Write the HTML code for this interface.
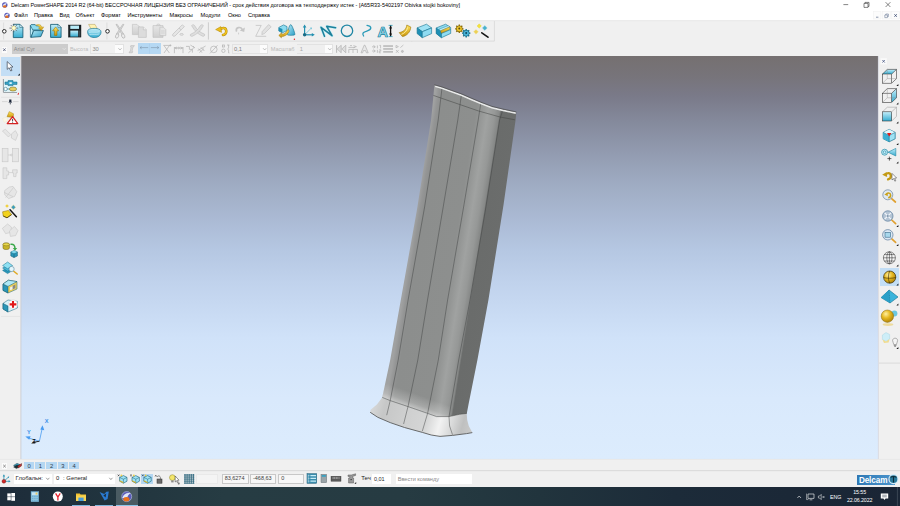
<!DOCTYPE html>
<html lang="ru">
<head>
<meta charset="utf-8">
<title>Delcam PowerSHAPE</title>
<style>
html,body{margin:0;padding:0;background:#fff;}
body{width:900px;height:506px;overflow:hidden;position:relative;font-family:"Liberation Sans",sans-serif;}
#app{position:absolute;left:0;top:0;width:900px;height:506px;overflow:hidden;background:#f0f0f0;}
.abs{position:absolute;}
.t{position:absolute;white-space:nowrap;font-size:5.6px;line-height:7px;color:#000;letter-spacing:-0.02px;}
#titlebar{left:0;top:0;width:900px;height:10px;background:#fff;}
#menubar{left:0;top:10px;width:900px;height:10.5px;background:#fff;border-bottom:0.5px solid #d8d8d8;}
#tb1{left:0;top:21px;width:900px;height:21px;background:#f0f0f0;}
#tb2{left:0;top:42px;width:900px;height:14px;background:#f0f0f0;}
#viewport{left:21px;top:56px;width:857px;height:403px;
 background:linear-gradient(to bottom,#757070 0%,#77747a 5%,#7a7a89 10%,#84899b 16%,#929bb0 24%,#9facc3 32%,#aab9d3 40%,#b5c7e2 48%,#c0d2ec 56%,#d0e2f9 70%,#d9e9fc 85%,#dcecfd 100%);}
#leftbar{left:0;top:56px;width:21px;height:403px;background:#f0f0f0;}
#rightbar{left:878px;top:56px;width:22px;height:403px;background:#f0f0f0;}
#tabbar{left:0;top:459px;width:900px;height:11px;background:#f0f0f0;}
#status{left:0;top:470px;width:900px;height:17px;background:#f0f0f0;border-top:0.5px solid #dcdcdc;}
#taskbar{left:0;top:487px;width:900px;height:19px;background:linear-gradient(to right,#1d2c3a 0%,#21343e 12%,#263c43 25%,#263b42 45%,#21343d 60%,#1c2b39 75%,#1a2535 100%);}
.inp{position:absolute;background:#fff;border:0.5px solid #c8c8c8;box-sizing:border-box;}
.inpd{position:absolute;background:#f6f6f6;border:0.5px solid #d9d9d9;box-sizing:border-box;}
svg{position:absolute;overflow:visible;}
</style>
</head>
<body>
<div id="app">
<!-- TITLE BAR -->
<div id="titlebar" class="abs">
  <div class="t" style="left:11px;top:1.9px;font-size:5.465px;"><span style="letter-spacing:-0.069px">Delcam PowerSHAPE 2014 R2 (64-bit) </span><span style="letter-spacing:-0.036px">БЕССРОЧНАЯ ЛИЦЕНЗИЯ БЕЗ ОГРАНИЧЕНИЙ - </span><span style="letter-spacing:0.032px">срок действия договора на техподдержку истек - </span><span style="letter-spacing:-0.007px">[A65R33-5402197 Obivka stojki bokoviny]</span></div>
</div>
<!-- MENU BAR -->
<div id="menubar" class="abs">
  <div class="t" style="left:14px;top:1.8px;">Файл</div>
  <div class="t" style="left:34px;top:1.8px;">Правка</div>
  <div class="t" style="left:59.5px;top:1.8px;">Вид</div>
  <div class="t" style="left:75.5px;top:1.8px;">Объект</div>
  <div class="t" style="left:101px;top:1.8px;">Формат</div>
  <div class="t" style="left:127.5px;top:1.8px;">Инструменты</div>
  <div class="t" style="left:169.5px;top:1.8px;">Макросы</div>
  <div class="t" style="left:200.5px;top:1.8px;">Модули</div>
  <div class="t" style="left:228px;top:1.8px;">Окно</div>
  <div class="t" style="left:248px;top:1.8px;">Справка</div>
</div>
<!-- TOOLBAR 1 -->
<div id="tb1" class="abs"></div>
<svg id="tb1icons" class="abs" style="left:0;top:0;" width="900" height="506" viewBox="0 0 900 506">
 <defs>
  <linearGradient id="cy" x1="0" y1="0" x2="0" y2="1"><stop offset="0" stop-color="#c4eefa"/><stop offset="1" stop-color="#35acd0"/></linearGradient>
  <linearGradient id="cy2" x1="0" y1="0" x2="1" y2="1"><stop offset="0" stop-color="#b8ebf9"/><stop offset="1" stop-color="#2c9fc6"/></linearGradient>
  <linearGradient id="gold" x1="0" y1="0" x2="0" y2="1"><stop offset="0" stop-color="#ffe25a"/><stop offset="1" stop-color="#c8940c"/></linearGradient>
  <linearGradient id="gry" x1="0" y1="0" x2="0" y2="1"><stop offset="0" stop-color="#e6e6e6"/><stop offset="1" stop-color="#cfcfcf"/></linearGradient>
 </defs>
 <!-- frame lines -->
 <path d="M0,20.6 H900" stroke="#dadada" stroke-width="0.6"/>
 <path d="M0,41.1 H494.4 V21" stroke="#d4d4d4" stroke-width="0.7" fill="none"/>
 <path d="M411.8,55.4 V41.4" stroke="#d4d4d4" stroke-width="0.7" fill="none"/>
 <!-- grips -->
 <path d="M3.6,22.5 V39.5 M106.9,22.5 V39.5" stroke="#d4d4d4" stroke-width="0.7"/>
 <circle cx="4.3" cy="31.3" r="1.8" fill="#fff" stroke="#2a2a2a" stroke-width="1"/>
 <circle cx="107.5" cy="31.3" r="1.8" fill="#fff" stroke="#2a2a2a" stroke-width="1"/>
 <!-- new doc -->
 <path d="M13.3,24.3 H19.8 L22.9,27.5 V37.6 H13.3 Z" fill="url(#cy)" stroke="#0e566e" stroke-width="0.8"/>
 <path d="M19.8,24.3 V27.5 H22.9 Z" fill="#eafaff" stroke="#0e566e" stroke-width="0.5"/>
 <circle cx="13.8" cy="28.1" r="2.9" fill="#f4fbfd" opacity="0.8"/>
 <path d="M13.8,23.9 V32.3 M9.4,28.1 H18.2 M10.8,25.1 L16.8,31.1 M16.8,25.1 L10.8,31.1" stroke="#4e5456" stroke-width="0.7"/>
 <circle cx="13.8" cy="28.1" r="2" fill="#fdf6a8"/>
 <circle cx="13.8" cy="28.1" r="1.1" fill="#fffde0"/>
 <!-- open folder -->
 <path d="M30.4,25.6 L31.2,24.6 H35.2 L36.2,25.8 H40.5 V30 H30.4 Z" fill="#8fdcf0" stroke="#0e566e" stroke-width="0.7"/>
 <path d="M30.4,25.6 V37.2 H31.2 L33.4,31 Z" fill="#bfeefa" stroke="#0e566e" stroke-width="0.6"/>
 <path d="M33.6,30.6 H43.4 L40.8,36.6 L31,37.3 Z" fill="url(#cy2)" stroke="#0e566e" stroke-width="0.8"/>
 <path d="M35.8,25.2 C38.6,23.6 41.4,24.8 41.8,27.2 L43.7,26.9 L41.4,30.6 L38.4,28 L40,27.7 C39.6,26.3 38,25.6 35.8,25.2 Z" fill="url(#gold)" stroke="#a87c08" stroke-width="0.4"/>
 <!-- import doc -->
 <path d="M50.6,24.4 H58 L61.1,27.6 V37.4 H50.6 Z" fill="url(#cy)" stroke="#0e566e" stroke-width="0.8"/>
 <path d="M58,24.4 V27.6 H61.1 Z" fill="#eafaff" stroke="#0e566e" stroke-width="0.5"/>
 <path d="M55.7,26.9 L58.8,30.8 H57 V35.4 H54.4 V30.8 H52.6 Z" fill="url(#gold)" stroke="#8a6a06" stroke-width="0.5"/>
 <!-- save -->
 <rect x="68.4" y="25" width="12.6" height="12.1" fill="#1c2226" stroke="#101416" stroke-width="0.4"/>
 <rect x="70.3" y="25.6" width="8.7" height="3.3" fill="#b9ecf8"/>
 <rect x="70.3" y="30.6" width="7.9" height="6" fill="url(#cy)"/>
 <rect x="78.9" y="30.6" width="1.4" height="6" fill="#3a4a50"/>
 <!-- print -->
 <path d="M88.6,24.4 H95 L97.4,28.8 H91 Z" fill="#fff2b0" stroke="#b09a50" stroke-width="0.5"/>
 <path d="M87.6,31.5 C87.6,29.4 90,28.4 94.2,28.4 C98.6,28.4 101,29.6 101,32 C101,35.6 98,37.5 94.2,37.5 C90.2,37.5 87.6,35.4 87.6,31.5 Z" fill="url(#cy)" stroke="#1a7896" stroke-width="0.7"/>
 <path d="M89,32.5 C92,31.4 96,33 99.5,31.6 M89.6,34.6 C92.6,33.8 96,35.4 99,34" stroke="#dff6fc" stroke-width="0.5" fill="none"/>
 <!-- scissors -->
 <g stroke="#b4b4b4" stroke-width="0.7" fill="#dedede">
  <path d="M116,24.4 L117.2,24.4 L123.6,34 L122.2,34.8 Z"/>
  <path d="M123.9,24.4 L122.7,24.4 L116.4,34 L117.8,34.8 Z"/>
  <ellipse cx="117.1" cy="36" rx="1.5" ry="2.3" transform="rotate(25 117.1 36)" fill="#ececec"/>
  <ellipse cx="123.2" cy="36" rx="1.5" ry="2.3" transform="rotate(-25 123.2 36)" fill="#ececec"/>
 </g>
 <!-- copy -->
 <g stroke="#bdbdbd" stroke-width="0.6" fill="url(#gry)">
  <path d="M132.4,24.4 H137 L139.4,26.8 V34.6 H132.4 Z"/>
  <path d="M138.4,26.9 H143.4 L146.3,29.8 V37.4 H138.4 Z" fill="#dcdcdc"/>
  <path d="M143.4,26.9 V29.8 H146.3" fill="#f2f2f2"/>
 </g>
 <!-- paste -->
 <g stroke="#bdbdbd" stroke-width="0.6" fill="url(#gry)">
  <path d="M153,25.6 H163 V37.4 H153 Z"/>
  <path d="M156.4,25.6 C156.4,23.6 160.4,23.6 160.4,25.6 Z" fill="#e8e8e8"/>
  <path d="M159.8,27.2 H163.4 L165.8,29.6 V35.6 H159.8 Z" fill="#e4e4e4"/>
  <path d="M161,31 H164.6 M161,33 H164.6" stroke="#c8c8c8"/>
 </g>
 <!-- eraser -->
 <g stroke="#b8b8b8" stroke-width="0.6" fill="#e6e6e6">
  <path d="M182.2,24.9 L184.4,26.5 L175,36 C173.6,37 171.8,35.6 172.8,34.2 Z"/>
  <path d="M179,28.2 L181.2,29.8" fill="none"/>
  <ellipse cx="181.6" cy="34.4" rx="1.7" ry="0.9"/>
 </g>
 <!-- delete X -->
 <g stroke="#bcbcbc" stroke-width="0.6" fill="#dedede">
  <path d="M191.6,25.6 C192.6,24.4 194,24.6 194.6,25.6 C197,30 200,32.4 204.6,34.2 C205,35.6 204,36.6 202.6,36.2 C198,34.2 194.6,31 191.6,25.6 Z"/>
  <path d="M203.4,25.6 C202.6,24.5 201,24.6 200.4,25.6 C198,29.8 195,32.4 190.4,34.4 C190,35.8 191,36.6 192.4,36.2 C197,34.2 200.6,31 203.4,25.6 Z"/>
 </g>
 <path d="M208.4,22.3 V39.6" stroke="#bebebe" stroke-width="0.7"/>
 <!-- undo -->
 <path d="M219.6,30.2 C221,27.6 225.6,27 226.2,30.4 C226.6,32.6 225,34.4 223,35" fill="none" stroke="#b58a0a" stroke-width="2.6" stroke-linecap="round"/>
 <path d="M219.6,30.2 C221,27.6 225.6,27 226.2,30.4 C226.6,32.6 225,34.4 223,35" fill="none" stroke="#f0c420" stroke-width="1.5" stroke-linecap="round"/>
 <path d="M215.6,29.6 L220.8,26.6 L221.6,32.4 Z" fill="#ecbe1c" stroke="#b58a0a" stroke-width="0.5"/>
 <!-- redo -->
 <path d="M236.4,31 C235.6,27.4 240.6,26.2 242.2,29.4" fill="none" stroke="#c6c6c6" stroke-width="1.7" stroke-linecap="round"/>
 <path d="M244.9,27.6 L244.2,32 L239.8,30.6 Z" fill="#c6c6c6"/>
 <path d="M238.6,32.6 V34.4" stroke="#cfcfcf" stroke-width="1"/>
 <!-- edit pencil -->
 <path d="M255.7,25.4 H261.2 L255.7,36.3 H266.2" fill="none" stroke="#bdbdbd" stroke-width="0.7"/>
 <path d="M268.6,24.6 L271.2,26.8 L264.4,33.6 L261.8,34.6 L262.2,31.6 Z" fill="#e2e2e2" stroke="#bcbcbc" stroke-width="0.6"/>
 <!-- shapes -->
 <path d="M278.8,27.4 L283.6,24.9 L287,26.6 L287,30.6 L282.4,32.8 L278.8,31 Z" fill="#8ddcf0" stroke="#12708e" stroke-width="0.6"/>
 <path d="M278.8,27.4 L282.4,29 L282.4,32.8 L278.8,31 Z" fill="#1f8fb4"/>
 <path d="M290.7,24.6 C292,24.6 294.9,33 294.9,34.4 C294.9,35.6 287.2,35.6 287.2,34.4 C287.2,33 289.4,24.6 290.7,24.6 Z" fill="url(#cy2)" stroke="#12708e" stroke-width="0.6"/>
 <path d="M287.6,29.8 C286.4,33 283.6,34.4 281.4,34.2 L281.6,32.8 L278.8,35.4 L281.4,37.8 L281.4,36.4 C285,36.6 288.4,34 289.2,30.4 Z" fill="url(#gold)" stroke="#9a7408" stroke-width="0.5"/>
 <circle cx="294.4" cy="39.3" r="0.7" fill="#e02020"/>
 <!-- axis -->
 <g stroke="#2390b0" stroke-width="1.2" fill="none">
  <path d="M304.6,34.8 V26.5"/><path d="M304.6,34.8 H312.6"/>
  <path d="M304.6,34.8 L311.2,28.2" stroke="#6cc0d6" stroke-width="0.8"/>
 </g>
 <path d="M304.6,24.4 L306.4,27.4 H302.8 Z M314.8,34.8 L311.8,36.6 V33 Z" fill="#2390b0"/>
 <path d="M312,27.4 L311.6,29.6 L309.8,27.8 Z" fill="#6cc0d6"/>
 <circle cx="304.6" cy="34.8" r="1.7" fill="#1a6c86"/>
 <!-- polyline -->
 <path d="M324.5,36.2 L321,27.3 L332,35.7 L326.7,26.3 L335.6,27.7" fill="none" stroke="#a8ecf8" stroke-width="2.6" stroke-linejoin="round" stroke-linecap="round" opacity="0.7"/>
 <path d="M324.5,36.2 L321,27.3 L332,35.7 L326.7,26.3 L335.6,27.7" fill="none" stroke="#1d7f9a" stroke-width="1.5" stroke-linejoin="round" stroke-linecap="round"/>
 <!-- circle -->
 <circle cx="347" cy="30.8" r="5.7" fill="none" stroke="#1f86a4" stroke-width="1.3"/>
 <!-- S curve -->
 <path d="M367,25.4 C372,26 372,29.4 367.4,30.9 C364,32 361.4,32.6 363.6,36" fill="none" stroke="#2a9ab8" stroke-width="1.3" stroke-linecap="round"/>
 <!-- A text -->
 <text x="377.6" y="37" font-family="Liberation Sans, sans-serif" font-weight="bold" font-size="14.6" fill="#8fdff2" stroke="#167a98" stroke-width="0.7">A</text>
 <path d="M390.6,25.4 V36.4" stroke="#111" stroke-width="1.3"/>
 <path d="M388.6,25.4 H392.6 M388.8,36.6 H392.6" stroke="#2a9ab8" stroke-width="0.8"/>
 <path d="M390.6,25.6 L392,28.4 H389.2 Z M390.6,36.4 L392,33.6 H389.2 Z" fill="#111"/>
 <!-- gold surface -->
 <path d="M406.8,25 L410.8,27 C410.4,32 407,35.8 402.4,36.6 L399.2,32.6 C403,32 406.4,29.6 406.8,25 Z" fill="url(#gold)" stroke="#9a7408" stroke-width="0.6"/>
 <path d="M407.6,27.4 C407,31 404.4,33.4 401.4,34.4" stroke="#fff2a8" stroke-width="0.9" fill="none"/>
 <!-- block -->
 <path d="M417.1,27.9 L426.5,24.2 L431.6,27.9 L422.3,31.7 Z" fill="#9fe2f4" stroke="#12708e" stroke-width="0.6"/>
 <path d="M417.1,27.9 L422.3,31.7 V37.7 L417.1,33.6 Z" fill="#1f8fb4" stroke="#12708e" stroke-width="0.6"/>
 <path d="M422.3,31.7 L431.6,27.9 V33.6 L422.3,37.7 Z" fill="#8fdcf2" stroke="#12708e" stroke-width="0.6"/>
 <!-- feature -->
 <path d="M436.3,27.9 L445.6,24.2 L450.7,27.4 V33.4 L441.5,37.7 L436.3,33.6 Z" fill="#8fdcf2" stroke="#12708e" stroke-width="0.6"/>
 <path d="M436.3,27.9 L441.5,31.7 V37.7 L436.3,33.6 Z" fill="#1f8fb4" stroke="#12708e" stroke-width="0.5"/>
 <path d="M439,29.2 L448.2,25.6 L449.6,27 L440.6,30.8 Z" fill="#bdeefa" stroke="#12708e" stroke-width="0.4"/>
 <path d="M440.6,30.8 L449.6,27 V29.6 L441.4,33.2 Z" fill="url(#gold)" stroke="#9a7408" stroke-width="0.4"/>
 <path d="M441.5,33.4 L450.7,29.6" stroke="#12708e" stroke-width="0.5"/>
 <!-- gears -->
 <g>
  <circle cx="459.3" cy="28.8" r="3" fill="#e6b81c" stroke="#6a5206" stroke-width="0.7"/>
  <path d="M459.3,24.6 V33 M455.1,28.8 H463.5 M456.3,25.8 L462.3,31.8 M462.3,25.8 L456.3,31.8" stroke="#8a6c0a" stroke-width="1.3"/>
  <circle cx="459.3" cy="28.8" r="2.5" fill="#f0c828"/>
  <circle cx="459.3" cy="28.6" r="1" fill="#5a4a10"/>
  <circle cx="466.2" cy="33.2" r="3" fill="#3aa6cc" stroke="#0e5a74" stroke-width="0.7"/>
  <path d="M466.2,29 V37.4 M462,33.2 H470.4 M463.2,30.2 L469.2,36.2 M469.2,30.2 L463.2,36.2" stroke="#14708e" stroke-width="1.3"/>
  <circle cx="466.2" cy="33.2" r="2.5" fill="#4ab4d8"/>
  <circle cx="466.2" cy="33" r="1" fill="#0e4a60"/>
 </g>
 <!-- wand -->
 <path d="M481.8,32.8 L488,37.2" stroke="#151515" stroke-width="1.6" stroke-linecap="round"/>
 <path d="M479.2,23.8 L481.4,26 L479.2,28.2 L477,26 Z" fill="#f4e23a" stroke="#d8c830" stroke-width="0.3"/>
 <path d="M484.8,25.6 L487.2,28 L484.8,30.4 L482.4,28 Z" fill="#4ab0cc" stroke="#8ad4e4" stroke-width="0.4"/>
 <path d="M476,29.4 L478.4,31.8 L476,34.2 L473.6,31.8 Z" fill="#ecd056" stroke="#f4e6a0" stroke-width="0.4"/>
</svg>
<!-- TOOLBAR 2 -->
<div id="tb2" class="abs">
  <div class="abs" style="left:1.6px;top:5px;width:5.6px;height:5.6px;background:#fbfbfb;"></div>
  <div class="abs" style="left:12px;top:1.6px;width:55.6px;height:10.6px;background:#cccccc;"></div>
  <div class="t" style="left:13.8px;top:3.7px;color:#8c8c8c;font-size:5.5px;">Arial Cyr</div>
  <div class="t" style="left:69.9px;top:4px;color:#bcbcbc;font-size:5.4px;">Высота</div>
  <div class="inp" style="left:89.7px;top:1.6px;width:34.2px;height:10.6px;background:#fcfcfc;border-color:#e2e2e2;"></div>
  <div class="abs" style="left:90.6px;top:2.4px;width:24.6px;height:9px;background:#f1f1f1;"></div>
  <div class="t" style="left:92.4px;top:3.7px;color:#8a8a8a;font-size:5.75px;">30</div>
  <div class="abs" style="left:138.2px;top:1.2px;width:22.5px;height:11px;background:#b5d8f3;"></div>
  <div class="inp" style="left:231.9px;top:1.9px;width:36.3px;height:10px;background:#fcfcfc;border-color:#e2e2e2;"></div>
  <div class="abs" style="left:232.6px;top:2.6px;width:27.4px;height:8.6px;background:#f0f0f0;"></div>
  <div class="t" style="left:234.1px;top:3.7px;color:#7c7c7c;font-size:5.75px;">0,1</div>
  <div class="t" style="left:270.8px;top:4px;color:#bababa;font-size:5.55px;">Масштаб</div>
  <div class="inp" style="left:296.7px;top:1.9px;width:36.7px;height:10px;background:#fcfcfc;border-color:#e2e2e2;"></div>
  <div class="abs" style="left:297.4px;top:2.6px;width:27.6px;height:8.6px;background:#efefef;"></div>
  <div class="t" style="left:299.7px;top:3.7px;color:#a8a8a8;font-size:5.75px;">1</div>
</div>
<svg id="tb2icons" class="abs" style="left:0;top:0;" width="900" height="506" viewBox="0 0 900 506">
 <path d="M3.2,48.4 L5.6,51 M5.6,48.4 L3.2,51" stroke="#4a5272" stroke-width="0.8"/>
 <g fill="none" stroke="#e6e6e6" stroke-width="0.7"><path d="M62.6,48 L64.2,49.8 L65.8,48"/></g>
 <g fill="none" stroke="#9a9a9a" stroke-width="0.6">
  <path d="M118.4,48.2 L120,50 L121.6,48.2"/><path d="M263.1,48.2 L264.7,50 L266.3,48.2"/><path d="M328.2,48.2 L329.8,50 L331.4,48.2"/>
 </g>
 <!-- italic I -->
 <path d="M130.8,45.6 H134.4 L133.6,46.8 H133 L132,51.6 H132.8 L132.2,52.8 H129 L129.6,51.6 H130.2 L131.2,46.8 H130.4 Z" fill="#dcdcdc" stroke="#b4b4b4" stroke-width="0.5"/>
 <!-- arrows in blue box -->
 <g stroke="#7e93aa" stroke-width="0.6" fill="none">
  <path d="M140,47.6 H148.2 M141.6,46.4 L140,47.6 L141.6,48.8"/>
  <path d="M150.8,47.6 H158.8 M157.2,46.4 L158.8,47.6 L157.2,48.8"/>
  <path d="M149.5,43.6 V53.8" stroke="#a4cbe8" stroke-width="0.5"/>
 </g>
 <g stroke="#b2b2b2" stroke-width="0.7" fill="none">
  <!-- X icon -->
  <path d="M163.4,45.4 H170 M164,45.6 L169.4,53 M169.4,45.6 L164,53 M170.4,44.4 V46.4 M169.4,45.4 H171.4"/>
  <!-- |-| -->
  <path d="M174.4,47 V53.2 M183,47 V53.2 M174.4,48 H183 M177,47 L175,48 L177,49 M180.4,47 L182.4,48 L180.4,49"/>
  <circle cx="178.7" cy="48" r="0.8" fill="#f0f0f0"/>
  <!-- zigzag arrows -->
  <path d="M186,46.4 H189.4 V49.4 H192.4 V52.6 M190.4,45 L194.4,47.6 M188.4,52.8 L192.8,49 M193,46 L194.6,47.6 L192.6,48.4"/>
  <path d="M197.6,50.6 L205.6,46 M199.4,52.6 L204,48.6 M198.4,48.6 L202,52.6 M201,47.4 L204.4,51"/>
  <!-- diameter -->
  <circle cx="213.8" cy="49.4" r="3.3"/><path d="M210,53.4 L217.6,45.2"/>
  <!-- boxes -->
  <circle cx="223.4" cy="50.8" r="1.7"/><rect x="222.4" y="45" width="2" height="2"/><path d="M227,45 H229.4 M228.6,45 V48 L227.6,49 L228.6,50 V53 H229.4"/>
  <!-- |<< -->
  <path d="M336.6,45.2 V52.8" stroke-width="0.9"/>
  <path d="M341.2,45.2 L337.2,49 L341.2,52.8 Z M345.8,45.2 L341.8,49 L345.8,52.8 Z" fill="#dedede"/>
  <!-- icon2 -->
  <path d="M348.4,47.4 H355 M353.4,45.6 L356.4,46.6 L353.4,47.8 M348.8,53 V49.4 H357.4 V53 M353,49.4 V53 M350,45.6 H352"/>
  <!-- A outline -->
  <path d="M361,52.8 L364.2,45.2 H365 L368.2,52.8 H366.4 L365.6,50.6 H363.4 L362.6,52.8 Z" fill="#e8e8e8"/>
  <!-- icon4 -->
  <path d="M372,46.8 H375 M373.4,45.4 L375.4,46.8 L373.4,48.2 M372,51 H375 M373.4,49.6 L375.4,51 L373.4,52.4 M377.4,45.4 V48.4 M379.4,45.4 H380.6 V48.4 M377.4,49.8 V52.8 M379.2,49.8 H380.8 V51.2 H379.2 V52.8 H380.8"/>
  <!-- icon6 -->
  <path d="M396,45.4 L398.4,46.6 L396,47.8 Z M400.4,47.6 L403.4,45 M396,50 L398.6,52.8 M398.6,50 L396,52.8"/>
  <circle cx="402.4" cy="51.4" r="1" fill="#c8c8c8"/>
 </g>
 <g fill="#bdbdbd"><rect x="383.2" y="45.2" width="9.8" height="1.7"/><rect x="383.2" y="48.1" width="9.8" height="1.7"/><rect x="383.2" y="51" width="9.8" height="1.7"/></g>
</svg>
<!-- VIEWPORT -->
<div id="viewport" class="abs"></div>
<svg id="model" class="abs" style="left:0;top:0;" width="900" height="506" viewBox="0 0 900 506">
 <defs>
  <linearGradient id="gBody" gradientUnits="userSpaceOnUse" x1="431" y1="120" x2="515.6" y2="133.5">
   <stop offset="0" stop-color="#a0a1a1"/>
   <stop offset="0.04" stop-color="#949595"/>
   <stop offset="0.09" stop-color="#8c8e8d"/>
   <stop offset="0.50" stop-color="#8d8f8e"/>
   <stop offset="0.56" stop-color="#949695"/>
   <stop offset="0.64" stop-color="#a0a2a1"/>
   <stop offset="0.72" stop-color="#969897"/>
   <stop offset="0.775" stop-color="#868887"/>
   <stop offset="0.792" stop-color="#6a6c6b"/>
   <stop offset="1" stop-color="#6b6d6c"/>
  </linearGradient>
 </defs>
 <path id="bodyShape" fill="url(#gBody)" d="M434.4,85 L442.1,87.3 L451.8,90.8 L461.5,94.2 L471.2,98.4 L480.9,102.5 L492,106.7 L503,109.4 L516.3,112.2 L515.6,120 L503.5,205 L488.4,300 L477.4,360 L468.5,404.5 L466.7,414 L449,417 L436.5,416.8 L427.6,413.6 L408,406.8 L390.2,400.8 L382.2,397.6 L390.2,360 L400.8,300 L416.9,210 L431.1,120 Z"/>
 <!-- flange -->
 <defs>
  <linearGradient id="gFl" gradientUnits="userSpaceOnUse" x1="372" y1="408" x2="470" y2="436">
   <stop offset="0" stop-color="#d6d7d7"/>
   <stop offset="0.12" stop-color="#c6c7c7"/>
   <stop offset="0.3" stop-color="#cdcece"/>
   <stop offset="0.55" stop-color="#d5d6d6"/>
   <stop offset="0.68" stop-color="#f2f2f2"/>
   <stop offset="0.8" stop-color="#d8d9d9"/>
   <stop offset="0.9" stop-color="#bfc0c0"/>
   <stop offset="1" stop-color="#c9caca"/>
  </linearGradient>
 </defs>
 <path fill="url(#gFl)" d="M382.2,397.4 L390.2,400.6 L408,406.6 L427.6,413.4 L436.5,416.6 L449,416.6 L459.6,414.3 L466.7,413.4 L467.2,420 L468.8,426 L472.3,432.6 L466.7,433.6 L452.5,435.4 L440,436.4 L431.2,435 L422.3,432.4 L404.5,427.5 L390.2,422.6 L377.8,417.3 L370.2,412.3 L370.6,409.8 L376.9,404.5 Z"/>
 <path fill="none" stroke="#5a5b5b" stroke-width="0.9" d="M370.2,412.3 L377.8,417.3 L390.2,422.6 L404.5,427.5 L422.3,432.4 L431.2,435 L440,436.4 L452.5,435.4 L466.7,433.6 L472.3,432.6"/>
 <defs>
  <linearGradient id="gFil" gradientUnits="userSpaceOnUse" x1="409" y1="407" x2="414" y2="393">
   <stop offset="0" stop-color="#ffffff" stop-opacity="0.5"/>
   <stop offset="0.35" stop-color="#ffffff" stop-opacity="0.22"/>
   <stop offset="1" stop-color="#ffffff" stop-opacity="0"/>
  </linearGradient>
 </defs>
 <path fill="url(#gFil)" d="M382.2,397.4 L390.2,400.6 L408,406.6 L427.6,413.4 L436.5,416.6 L449,416.6 L452,400.6 L439,400.6 L430.4,397.4 L410.8,390.6 L393,384.6 L385,381.4 Z"/>
 <!-- seams -->
 <g fill="none" stroke="#404241" stroke-width="0.48">
  <path d="M442.1,87.3 L438.2,120 L424.6,207 L408.1,300 L398.2,360 L390.2,400.6 L386.7,415.2"/>
  <path d="M461.5,94.2 L457.8,120 L443.2,207 L427.5,300 L417.8,360 L408,406.6 L403.6,424"/>
  <path d="M480.9,102.5 L478.2,120 L463.6,207 L447.6,300 L438.3,360 L427.6,413.4 L422.3,431.2"/>
  <path d="M503,109.4 L499.6,120 L485.9,207 L470,300 L458.7,360 L449,416.6 L449.6,426 L452.5,434.7"/>
  <path d="M382.2,397.4 L390.2,400.6 L408,406.6 L427.6,413.4 L436.5,416.6 L449,416.6 L459.6,414.3 L466.7,413.4" stroke-width="0.5"/>
  <path d="M433.4,95.4 L441.7,98.3 L459.4,104.4 L478.9,111.1 L500,117 L514.9,119.8" stroke-width="0.5"/>
 </g>
 <!-- top highlight -->
 <path fill="none" stroke="#e8e9e9" stroke-width="1.6" d="M435.2,86.2 L442.1,88.3 L451.8,91.8 L461.5,95.2 L471.2,99.4 L480.9,103.5 L492,107.7 L503,110.4 L515.8,113.1"/>
 <path fill="none" stroke="#4a4b4b" stroke-width="0.7" d="M434.4,84.8 L442.1,87 L451.8,90.5 L461.5,93.9 L471.2,98.1 L480.9,102.2 L492,106.4 L503,109.1 L516.3,111.9"/>
 <!-- axes -->
 <g>
  <path d="M39.4,441.2 L42.2,428.5" stroke="#4a9cf0" stroke-width="0.8" fill="none"/>
  <path d="M42.5,425.3 L44.3,430.2 L40.3,429.6 Z" fill="#4a9cf0"/>
  <path d="M39.4,441.2 L29,438.2" stroke="#4a9cf0" stroke-width="0.8" fill="none"/>
  <path d="M25.3,436.4 L30.6,436.2 L29.2,439.8 Z" fill="#4a9cf0"/>
  <path d="M39.4,441.2 L33,442.5" stroke="#222" stroke-width="1" fill="none"/>
  <path d="M31,443.4 L35,441 L35.3,443.6 Z" fill="#222"/>
  <text x="44.7" y="422.6" font-family="Liberation Sans, sans-serif" font-size="5.6" font-weight="bold" fill="#3a90e8">X</text>
  <text x="27.1" y="433.6" font-family="Liberation Sans, sans-serif" font-size="5.6" font-weight="bold" fill="#3a90e8">Y</text>
  <text x="32.3" y="442.6" font-family="Liberation Sans, sans-serif" font-size="5.6" font-weight="bold" fill="#111">Z</text>
 </g>
</svg>
<!-- LEFT BAR -->
<div id="leftbar" class="abs">
  <div class="abs" style="left:1px;top:0.8px;width:19.2px;height:18.8px;background:#c3def5;"></div>
</div>
<svg id="lbicons" class="abs" style="left:0;top:0;" width="900" height="506" viewBox="0 0 900 506">
 <path d="M20.9,56 V459" stroke="#c9ccd4" stroke-width="0.9"/>
 <!-- cursor -->
 <path d="M7.2,61.6 V69.4 L9.1,67.7 L10.7,71 L12,70.4 L10.5,67.2 L13,67 Z" fill="#fff" stroke="#3a4250" stroke-width="0.7" stroke-linejoin="round"/>
 <path d="M19.8,73.6 V75.6 H17.8 Z" fill="#111"/>
 <!-- config icon -->
 <path d="M3.4,79 V92.4 H17" fill="none" stroke="#8a9298" stroke-width="0.9"/>
 <rect x="4" y="79.2" width="13.6" height="12.6" fill="#dff5fb"/>
 <path d="M5,82 H8 V80.6 H13 V82 H17 V84.4 H13 V85.6 H8 V84.4 H5 Z" fill="#38a4c8" stroke="#14607a" stroke-width="0.5"/>
 <path d="M9.4,82.2 H11.8 V84 H9.4 Z" fill="#dff5fb"/>
 <circle cx="5.6" cy="89" r="1.7" fill="#fff" stroke="#14607a" stroke-width="0.5"/>
 <path d="M7.2,89 H10" stroke="#14607a" stroke-width="0.6"/>
 <ellipse cx="13" cy="89" rx="3.6" ry="2" fill="#e8cf60" stroke="#6a5a10" stroke-width="0.5"/>
 <path d="M19,92.6 V94.4 H17.2 Z" fill="#e02020"/>
 <path d="M1,97.3 H20" stroke="#dcdcdc" stroke-width="0.6"/>
 <!-- pin -->
 <path d="M2,101.6 H7.6 M13,101.6 H18.6" stroke="#c4c4c4" stroke-width="0.6"/>
 <path d="M9.2,99.6 H11.4 V101.4 L12.2,102.6 H8.4 L9.2,101.4 Z" fill="#1a2436"/><path d="M10.3,102.6 V104.4" stroke="#1a2436" stroke-width="0.7"/>
 <!-- warning -->
 <path d="M9.2,111.6 L13.6,113.8 L13.2,117.6 L7,116.8 Z" fill="url(#gold)" stroke="#9a7408" stroke-width="0.4"/>
 <path d="M2.6,118.4 L7,117 L8,121 L4,122.4 Z" fill="#fbf6e4" stroke="#e6dfc4" stroke-width="0.3"/>
 <path d="M12.6,116.6 L17.8,123.6 H7.2 Z" fill="#fff" stroke="#d42222" stroke-width="1.2" stroke-linejoin="round"/>
 <path d="M12.6,118.8 V121.4 M12.6,122.2 V122.8" stroke="#111" stroke-width="0.8"/>
 <!-- gray icons -->
 <g fill="#e6e6e6" stroke="#c6c6c6" stroke-width="0.6">
  <path d="M2.4,131 L5.4,129.2 L10.8,134.6 L8.4,137 Z"/><path d="M11.6,133.8 L15.4,130.6 L17.8,134.8 L15.6,140.4 L11.4,138 Z"/>
  <rect x="2.2" y="148.4" width="5.8" height="13.4"/><rect x="12.6" y="148.4" width="5.8" height="13.4"/><path d="M8,155 H12.6"/><circle cx="11.4" cy="155" r="0.9"/>
  <path d="M3,167.8 H6.8 V171 H8.6 V175 H6.8 V178.6 H3 Z"/><path d="M12.6,169.8 H17.2 V173 H16 V176.6 H13.6 V173 H12.6 Z"/><path d="M8.6,172.6 H12.6"/>
  <path d="M4.6,190.6 L9.4,187 L13,186.4 L16.8,191.6 L14.6,196.4 L8.6,198.6 L4.8,195 Z"/><path d="M5.6,197.6 L13.6,187.4 M4,192.4 L13,196.6" fill="none"/>
  <path d="M2.4,228.4 L7.6,224 L11.4,227 L11,232.4 L5.6,233.6 Z"/><path d="M9.4,231 L14.4,226.4 L18,230.6 L15.6,235.6 L10.4,236.4 Z"/>
 </g>
 <!-- gold wand -->
 <path d="M2.6,211.8 L8.4,210.4 L11.6,214.6 L7,217.8 L3.2,216 Z" fill="#f2d21c" stroke="#8a6c06" stroke-width="0.5"/>
 <path d="M3.2,216 L7,217.8 L11.6,214.6" fill="none" stroke="#4a3a04" stroke-width="0.8"/>
 <path d="M10,209.8 L16.4,216.8" stroke="#151515" stroke-width="1.5" stroke-linecap="round"/>
 <path d="M7,204.2 L8.8,206 L7,207.8 L5.2,206 Z" fill="#f0d040"/>
 <path d="M13.4,205 L15.6,207.2 L13.4,209.4 L11.2,207.2 Z" fill="#3a9cc0" stroke="#e8d468" stroke-width="0.4"/>
 <!-- cylinder + box -->
 <path d="M3,244.4 C3,242.4 9.4,242.4 9.4,244.4 V248 C9.4,250 3,250 3,248 Z" fill="#c8b42a" stroke="#6a5c0a" stroke-width="0.5"/>
 <ellipse cx="6.2" cy="244.4" rx="3.2" ry="1.4" fill="#e8d850" stroke="#6a5c0a" stroke-width="0.4"/>
 <path d="M10.4,244.4 C13.4,243.4 15,245.6 15,248.4" fill="none" stroke="#3aa84a" stroke-width="1.5"/>
 <path d="M12.8,248 H17.2 L15,250.8 Z" fill="#3aa84a"/>
 <path d="M10.8,252 L14,250.6 L17.4,252 V256 L14,257.6 L10.8,256 Z" fill="#2a96b8" stroke="#0e566e" stroke-width="0.5"/>
 <path d="M10.8,252 L14,253.4 L17.4,252 M14,253.4 V257.6" fill="none" stroke="#0e566e" stroke-width="0.5"/>
 <path d="M10.8,252 L14,250.6 L17.4,252 L14,253.4 Z" fill="#7fd6ec"/>
 <!-- stack + magnifier -->
 <g stroke="#14708e" stroke-width="0.5">
  <path d="M2.6,270.4 L7.6,267.4 L12.6,270.4 L7.6,273.6 Z" fill="#2a96b8"/>
  <path d="M2.6,268 L7.6,265 L12.6,268 L7.6,271.2 Z" fill="#4ab8d8"/>
  <path d="M2.6,265.6 L7.6,262 L12.6,265.6 L7.6,268.8 Z" fill="#8fe0f2"/>
 </g>
 <path d="M13.4,271 L17.2,274" stroke="#e0a820" stroke-width="1.5" stroke-linecap="round"/>
 <circle cx="11.6" cy="269" r="2.6" fill="#e4f6fc" stroke="#5a8aa0" stroke-width="0.6"/>
 <!-- open box -->
 <path d="M3,284 L8.4,280.2 L17,281.6 V289 L8,293 L3,290.4 Z" fill="#eed260" stroke="#14607a" stroke-width="0.5"/>
 <path d="M3,284 L8,286.4 V293 L3,290.4 Z" fill="#2a96b8" stroke="#0e566e" stroke-width="0.5"/>
 <path d="M3,284 L8.4,280.2 L17,281.6 L8,286.4 Z" fill="#aee8f6" stroke="#0e566e" stroke-width="0.5"/>
 <path d="M9.6,287 L15.6,284.4 V288.4 L9.6,291 Z" fill="#f2f2ea" stroke="#e8c840" stroke-width="0.8"/><path d="M12.6,285.8 L15.4,284.6 V288.2 L12.6,289.4 Z" fill="#8a8a80"/>
 <!-- medkit -->
 <path d="M3,303.4 L8,300 L17.4,301.4 V308 L8,312 L3,309 Z" fill="#d8f2fa" stroke="#14607a" stroke-width="0.5"/>
 <path d="M3,303.4 L8,306 V312 L3,309 Z" fill="#2a96b8" stroke="#0e566e" stroke-width="0.5"/>
 <circle cx="13" cy="304.4" r="4.5" fill="#fff" stroke="#c8c8c8" stroke-width="0.4"/>
 <path d="M13,301 V307.8 M9.6,304.4 H16.4" stroke="#e01818" stroke-width="2.1"/>
 <path d="M1,316.4 H20" stroke="#dcdcdc" stroke-width="0.6"/>
</svg>
<!-- RIGHT BAR -->
<div id="rightbar" class="abs">
  <div class="abs" style="left:2.2px;top:212.2px;width:18.8px;height:17.8px;background:#c3def5;"></div>
</div>
<svg id="rbicons" class="abs" style="left:0;top:0;" width="900" height="506" viewBox="0 0 900 506">
 <path d="M878.4,56 V459" stroke="#d4d7de" stroke-width="0.8"/>
 <path d="M879,363.1 H900" stroke="#cdcdcd" stroke-width="0.6"/>
 <rect x="880.6" y="58.2" width="6.2" height="6.2" fill="#fafafa"/>
 <path d="M882.4,60 L884.8,62.6 M884.8,60 L882.4,62.6" stroke="#4a5a86" stroke-width="0.8"/>
 <g fill="#111">
  <path d="M898.4,84 V86 H896.4 Z"/><path d="M898.4,102.6 V104.6 H896.4 Z"/><path d="M898.4,121.4 V123.4 H896.4 Z"/>
  <path d="M898.4,143 V145 H896.4 Z"/><path d="M898.4,161.6 V163.6 H896.4 Z"/><path d="M898.4,225 V227 H896.4 Z"/>
  <path d="M898.4,244 V246 H896.4 Z"/><path d="M898.4,264.6 V266.6 H896.4 Z"/><path d="M898.4,283.6 V285.6 H896.4 Z"/>
  <path d="M898.4,303.6 V305.6 H896.4 Z"/><path d="M898.4,347 V349 H896.4 Z"/>
 </g>
 <!-- cube 1 top -->
 <path d="M882.5,74 L887.3,69.4 H896.5 L891.7,74 Z" fill="url(#cy)"/>
 <g fill="none" stroke="#2a2a2a" stroke-width="0.55">
  <rect x="882.5" y="74" width="9.2" height="9.2"/><path d="M882.5,74 L887.3,69.4 H896.5 V78.6 L891.7,83.2 M891.7,74 L896.5,69.4"/>
  <path d="M887.3,69.4 V78.6 H896.5 M887.3,78.6 L882.5,83.2" stroke="#8a8a8a" stroke-width="0.4"/>
 </g>
 <!-- cube 2 right -->
 <path d="M891.7,93.2 L896.5,88.6 V97.8 L891.7,102.4 Z" fill="url(#cy)"/>
 <g fill="none" stroke="#2a2a2a" stroke-width="0.55">
  <rect x="882.5" y="93.2" width="9.2" height="9.2"/><path d="M882.5,93.2 L887.3,88.6 H896.5 V97.8 L891.7,102.4 M891.7,93.2 L896.5,88.6"/>
  <path d="M887.3,88.6 V97.8 H896.5 M887.3,97.8 L882.5,102.4" stroke="#8a8a8a" stroke-width="0.4"/>
 </g>
 <!-- cube 3 front -->
 <rect x="882.5" y="111.8" width="9.2" height="9.2" fill="url(#cy)"/>
 <g fill="none" stroke="#2a2a2a" stroke-width="0.55">
  <rect x="882.5" y="111.8" width="9.2" height="9.2"/>
  <path d="M882.5,111.8 L887.3,107.2 H896.5 V116.4 L891.7,121 M891.7,111.8 L896.5,107.2" stroke="#8a8a8a" stroke-width="0.45"/>
 </g>
 <!-- iso cube -->
 <path d="M883.2,132.4 L889.2,129.4 L895.2,132.4 V138.8 L889.2,141.8 L883.2,138.8 Z" fill="#9fe2f4" stroke="#12708e" stroke-width="0.7"/>
 <path d="M883.2,132.4 L889.2,135.4 V141.8 L883.2,138.8 Z" fill="#3ab0d4"/>
 <path d="M883.2,132.4 L889.2,129.4 L895.2,132.4 L889.2,135.4 Z" fill="#dff6fc"/>
 <path d="M883.2,132.4 L889.2,135.4 L895.2,132.4 M889.2,135.4 V141.8" fill="none" stroke="#12708e" stroke-width="0.6"/>
 <path d="M887,133 H891.4 L889.2,136.4 Z" fill="#e01818"/>
 <!-- camera -->
 <circle cx="884.6" cy="152.2" r="3" fill="#c8eef8" stroke="#1f86a4" stroke-width="0.7"/><circle cx="884.6" cy="152.2" r="1.4" fill="none" stroke="#1f86a4" stroke-width="0.6"/>
 <path d="M888,152.2 L895.8,148.4 V156 Z" fill="url(#cy)" stroke="#1f86a4" stroke-width="0.6"/>
 <path d="M887.4,158.6 H891.4 M889.4,156.6 V160.6" stroke="#222" stroke-width="0.7"/>
 <!-- undo cursor -->
 <path d="M885.6,175 C886.6,172.4 890.6,172.4 890.8,175.6 C891,177.6 889.6,179 888,179.4" fill="none" stroke="#c39a14" stroke-width="2.2" stroke-linecap="round"/>
 <path d="M882.2,174.8 L886.6,172 L887.2,177 Z" fill="#c39a14"/>
 <path d="M892,173.4 V180 L893.6,178.6 L894.8,181.2 L895.8,180.8 L894.6,178.2 L896.6,178 Z" fill="#fff" stroke="#333" stroke-width="0.5"/>
 <!-- rotate mag -->
 <path d="M891.6,198.6 L895.4,202" stroke="#e0a030" stroke-width="1.7" stroke-linecap="round"/>
 <circle cx="887.8" cy="194.8" r="5" fill="#dfe8f2" stroke="#7890a8" stroke-width="0.8"/>
 <path d="M886.6,194.6 C887,192.6 890.4,192.4 890.6,195 C890.8,196.8 889.4,197.6 888.2,197.8" fill="none" stroke="#caa21a" stroke-width="1.5"/>
 <path d="M884.4,194.4 L887.4,192.6 L887.8,196.2 Z" fill="#caa21a"/>
 <!-- zoom fit -->
 <path d="M891.8,220 L895.6,223.6" stroke="#e0a030" stroke-width="1.7" stroke-linecap="round"/>
 <circle cx="887.8" cy="216" r="5.2" fill="#b4c4d4" stroke="#6a88a4" stroke-width="0.8"/>
 <path d="M884.6,212.8 L891,219.2 M891,212.8 L884.6,219.2" stroke="#f4f8fc" stroke-width="1.1"/>
 <path d="M887.8,216 m-1,0 a1,1 0 1,0 2,0 a1,1 0 1,0 -2,0" fill="#7890a8"/>
 <!-- zoom box -->
 <path d="M891.8,238.8 L895.6,242.4" stroke="#e0a030" stroke-width="1.7" stroke-linecap="round"/>
 <circle cx="887.8" cy="234.8" r="5.2" fill="#dce8f4" stroke="#6a88a4" stroke-width="0.8"/>
 <rect x="885" y="232.4" width="5.6" height="4.8" fill="#a8d8ec" stroke="#3a6a8a" stroke-width="0.6"/>
 <!-- wire globe -->
 <g fill="none" stroke="#2a2a2a" stroke-width="0.55">
  <circle cx="889.4" cy="257.8" r="6" fill="#f8f8f8"/><ellipse cx="889.4" cy="257.8" rx="2.6" ry="6"/><path d="M889.4,251.8 V263.8 M883.4,257.8 H895.4 M884.4,254.6 H894.4 M884.4,261 H894.4"/>
 </g>
 <!-- shaded globe -->
 <defs><radialGradient id="gs" cx="0.38" cy="0.32" r="0.75"><stop offset="0" stop-color="#fff0a0"/><stop offset="0.45" stop-color="#e6b820"/><stop offset="1" stop-color="#a87c08"/></radialGradient></defs>
 <circle cx="889.7" cy="277.1" r="6.1" fill="url(#gs)" stroke="#3a2c04" stroke-width="0.7"/>
 <path d="M889.7,271 C888,274 888,280 889.7,283.2 M883.6,277.4 C886,278.6 893,278.6 895.8,277.4" fill="none" stroke="#3a2c04" stroke-width="0.6"/>
 <!-- pyramid -->
 <path d="M889.1,290 L898,297 L890,303 L881.1,297.6 Z" fill="#3ab4dc" stroke="#14708e" stroke-width="0.6"/>
 <path d="M889.1,290 L890,303 L881.1,297.6 Z" fill="#2aa0c8"/>
 <path d="M889.1,290 L890,303" stroke="#14708e" stroke-width="0.5" stroke-dasharray="1 0.7"/>
 <!-- gold sphere -->
 <ellipse cx="888" cy="324.6" rx="5.4" ry="1.4" fill="#ecd68a" opacity="0.8"/>
 <circle cx="894.4" cy="313.6" r="3" fill="#6cc8e0"/>
 <circle cx="887.4" cy="316.2" r="6.2" fill="url(#gs)" stroke="#8a6c10" stroke-width="0.5"/>
 <!-- bulb -->
 <path d="M882.4,335 L886,332.6 L889.6,334.4 V339 L886,341.4 L882.4,339.4 Z" fill="#cdeef8" stroke="#a8d4e2" stroke-width="0.5"/>
 <path d="M882.4,339.4 L886,341.4 L889.6,339 L888.6,342.4 L884,343 Z" fill="#f0dc90"/>
 <path d="M892.6,340.6 C892.6,337.4 897.6,337.4 897.6,340.6 C897.6,342.4 896.4,343 896.4,344.6 H893.8 C893.8,343 892.6,342.4 892.6,340.6 Z" fill="#f4f4f4" stroke="#6a6a6a" stroke-width="0.5"/>
 <path d="M893.8,345.4 H896.4 M894.2,346.4 H896" stroke="#555" stroke-width="0.6"/>
</svg>
<!-- TAB BAR -->
<div id="tabbar" class="abs">
  <div class="abs" style="left:1.6px;top:4.2px;width:5.8px;height:5.6px;background:#fbfbfb;"></div>
  <div class="abs" style="left:24.2px;top:3.1px;width:9.9px;height:6.7px;background:#b5d7f2;"></div>
  <div class="abs" style="left:35.1px;top:3.1px;width:10.4px;height:6.7px;background:#b5d7f2;"></div>
  <div class="abs" style="left:46.4px;top:3.1px;width:10.4px;height:6.7px;background:#b5d7f2;"></div>
  <div class="abs" style="left:57.7px;top:3.1px;width:10px;height:6.7px;background:#b5d7f2;"></div>
  <div class="abs" style="left:68.7px;top:3.1px;width:10.4px;height:6.7px;background:#b5d7f2;"></div>
  <div class="t" style="left:27.6px;top:3.9px;color:#2a3a4a;font-size:5.8px;">0</div>
  <div class="t" style="left:38.8px;top:3.9px;color:#2a3a4a;font-size:5.8px;">1</div>
  <div class="t" style="left:50px;top:3.9px;color:#2a3a4a;font-size:5.8px;">2</div>
  <div class="t" style="left:61.2px;top:3.9px;color:#2a3a4a;font-size:5.8px;">3</div>
  <div class="t" style="left:72.4px;top:3.9px;color:#2a3a4a;font-size:5.8px;">4</div>
</div>
<!-- STATUS BAR -->
<div id="status" class="abs">
  <div class="abs" style="left:13.9px;top:3.3px;width:37.8px;height:9.6px;background:#fff;"></div>
  <div class="t" style="left:15.6px;top:4.4px;font-size:5.9px;color:#1a1a1a;">Глобальн:</div>
  <div class="abs" style="left:53.9px;top:3.3px;width:61.2px;height:9.6px;background:#fff;"></div>
  <div class="t" style="left:56.1px;top:4.4px;font-size:5.9px;color:#1a1a1a;">0</div>
  <div class="t" style="left:63.1px;top:4.4px;font-size:5.9px;color:#1a1a1a;">: General</div>
  <div class="abs" style="left:140.9px;top:2.7px;width:11.9px;height:10.6px;background:#b5d7f2;"></div>
  <div class="inpd" style="left:196px;top:2.8px;width:21.6px;height:10.2px;background:#f4f4f4;border-color:#e9e9e9;"></div>
  <div class="inp" style="left:221.6px;top:2.8px;width:27.1px;height:10.3px;background:#f7f7f7;border-color:#c8c8c8;"></div>
  <div class="t" style="left:224.7px;top:4.2px;font-size:5.5px;color:#3c3c3c;">83,6274</div>
  <div class="inp" style="left:250.3px;top:2.8px;width:26px;height:10.3px;background:#f7f7f7;border-color:#c8c8c8;"></div>
  <div class="t" style="left:253px;top:4.2px;font-size:5.5px;color:#3c3c3c;">-468,63</div>
  <div class="inp" style="left:278.3px;top:2.8px;width:26.1px;height:10.3px;background:#f7f7f7;border-color:#c8c8c8;"></div>
  <div class="t" style="left:281.3px;top:4.2px;font-size:5.5px;color:#3c3c3c;">0</div>
  <div class="t" style="left:361.3px;top:4.2px;font-size:6px;color:#1a1a1a;">Теч</div>
  <div class="abs" style="left:371.6px;top:3.3px;width:19.1px;height:9.6px;background:#fff;"></div>
  <div class="t" style="left:374px;top:4.7px;font-size:5.5px;color:#2a2a2a;">0,01</div>
  <div class="abs" style="left:395.6px;top:3.3px;width:76.4px;height:9.6px;background:#fff;"></div>
  <div class="t" style="left:397.7px;top:4.7px;font-size:5.6px;color:#8a8a8a;">Ввести команду</div>
  <div class="abs" style="left:856.7px;top:3.6px;width:38px;height:10px;background:linear-gradient(to right,#2f78b4,#4a94cc);"></div>
  <div class="t" style="left:858.9px;top:4.5px;font-size:8.2px;line-height:9px;color:#fff;font-weight:bold;letter-spacing:-0.12px;">Delcam</div>
  <div class="abs" style="left:0;top:15.6px;width:900px;height:1.2px;background:#f8f8f8;"></div>
</div>
<!-- TASKBAR -->
<div id="taskbar" class="abs">
  <div class="abs" style="left:116.1px;top:0;width:21.9px;height:19px;background:#4a5b62;"></div>
  <div class="abs" style="left:71.7px;top:18px;width:18.3px;height:1px;background:#7fb6dc;"></div>
  <div class="abs" style="left:95px;top:18px;width:17.8px;height:1px;background:#7fb6dc;"></div>
  <div class="abs" style="left:116.1px;top:18px;width:21.9px;height:1px;background:#8cc6ea;"></div>
  <div class="t" style="left:830px;top:6.5px;font-size:5.3px;color:#fff;">ENG</div>
  <div class="t" style="left:853.3px;top:2px;font-size:5.3px;color:#fff;letter-spacing:-0.12px;">15:55</div>
  <div class="t" style="left:847px;top:10.3px;font-size:5.3px;color:#fff;letter-spacing:-0.12px;">22.06.2022</div>
</div>
<svg id="bticons" class="abs" style="left:0;top:0;" width="900" height="506" viewBox="0 0 900 506">
 <path d="M0,459.4 H900" stroke="#e2e2e2" stroke-width="0.6"/>
 <path d="M0,470.9 H900" stroke="#dddddd" stroke-width="0.6"/>
 <!-- tab close x -->
 <path d="M3.2,464.8 L5.8,467.4 M5.8,464.8 L3.2,467.4" stroke="#6a6a6a" stroke-width="0.7"/>
 <!-- layers icon -->
 <path d="M13.6,465.4 L17,463.4 L20,464.6 L16.6,466.8 Z" fill="#3aa0c0" stroke="#0e3a4a" stroke-width="0.5"/>
 <path d="M13.6,467 L17,465 L20,466.2 L16.6,468.6 Z" fill="#1a3038" stroke="#0a1a20" stroke-width="0.4"/>
 <path d="M17.6,466 L21.6,463.6 L21.4,466 L18.4,468 Z" fill="#c03030" stroke="#401010" stroke-width="0.4"/>
 <!-- axis icon status -->
 <path d="M3.9,481.3 V475.6 M3.9,481.3 H9.4 M3.9,481.3 L8.6,477" stroke="#2a94b4" stroke-width="0.8" fill="none"/>
 <path d="M3.9,474.2 L5.1,476.4 H2.7 Z M10.6,481.3 L8.6,482.4 V480.2 Z M9.2,476.4 L8.8,478.2 L7.6,477 Z" fill="#2a94b4"/>
 <circle cx="3.9" cy="481.3" r="1.9" fill="#d02828" stroke="#6a1010" stroke-width="0.4"/>
 <g fill="none" stroke="#5a5a5a" stroke-width="0.6"><path d="M46.2,477.8 L47.8,479.6 L49.4,477.8"/><path d="M109.3,477.8 L110.9,479.6 L112.5,477.8"/></g>
 <!-- cube icons -->
 <g id="cubeic">
  <path d="M119.6,477.4 L123.4,475.6 L127,477.4 V481.2 L123.4,483.2 L119.6,481.2 Z" fill="#9fe2f4" stroke="#14607a" stroke-width="0.6"/>
  <path d="M119.6,477.4 L123.4,479.2 L127,477.4 M123.4,479.2 V483.2" fill="none" stroke="#14607a" stroke-width="0.5"/>
  <path d="M119.6,480.2 L123.4,482 V483.2 L119.6,481.2 Z" fill="#e0b020"/>
  <path d="M117.8,474.6 L119.4,476.2 M119.4,474.6 L117.8,476.2" stroke="#222" stroke-width="0.6"/>
  <circle cx="121.4" cy="475.4" r="0.9" fill="#f0d040"/>
 </g>
 <use href="#cubeic" x="12.4" y="0"/>
 <use href="#cubeic" x="24.2" y="0"/>
 <!-- lock -->
 <rect x="157" y="479" width="5" height="4.2" fill="#6a6a6a" stroke="#2a2a2a" stroke-width="0.5"/>
 <path d="M155,475 L156.6,476.6 M156.6,475 L155,476.6 M157.4,477 C157.4,475.4 160,475.4 160.4,477.4 V479" stroke="#444" stroke-width="0.6" fill="none"/>
 <!-- bulb -->
 <circle cx="172.4" cy="477.6" r="2.9" fill="#f4e66a" stroke="#8a8430" stroke-width="0.5"/>
 <path d="M171.2,480.4 H173.6 V482.4 H171.2 Z" fill="#8a8a8a"/>
 <path d="M175.2,476 V482 L176.6,480.8 L177.6,483 L178.4,482.6 L177.4,480.4 L179,480.2 Z" fill="#fff" stroke="#333" stroke-width="0.5"/>
 <path d="M179.4,482.6 V484.2 H177.8 Z" fill="#111"/>
 <!-- grid -->
 <g stroke="#1f5c74" stroke-width="0.8"><path d="M185,474 V483.6 M187.1,474 V483.6 M189.2,474 V483.6 M191.3,474 V483.6 M193.4,474 V483.6"/><path d="M184,475 H194.4 M184,477.05 H194.4 M184,479.1 H194.4 M184,481.15 H194.4 M184,483.2 H194.4"/></g>
 <!-- icon A table -->
 <rect x="307" y="473.7" width="9.7" height="9.6" fill="#3a8cac" stroke="#1a5a74" stroke-width="0.5"/>
 <path d="M310.4,475.6 H316 M310.4,478.4 H316 M310.4,481.2 H316" stroke="#c8ecf6" stroke-width="1.2"/>
 <path d="M308.2,474.6 V482.6 M308.2,475.6 H309.6 M308.2,478.4 H309.6 M308.2,481.2 H309.6" stroke="#e8f8fc" stroke-width="0.5"/>
 <!-- icon B calc -->
 <rect x="321" y="474.3" width="5.7" height="8.4" fill="#9aa4a8" stroke="#6a7478" stroke-width="0.5"/>
 <rect x="321.8" y="475" width="4.1" height="1.8" fill="#3aa0c0"/>
 <!-- icon C ruler -->
 <rect x="331" y="476.2" width="10" height="5" fill="#5a5a5a" stroke="#3a3a3a" stroke-width="0.4"/>
 <path d="M332.6,478 H339.4" stroke="#e8e8e8" stroke-width="1.2" stroke-dasharray="1 0.6"/>
 <!-- icon D machine -->
 <path d="M348,475 H351.4 L355.6,473.8 V475.4 L352.6,476.4 V478 H353.6 V483 H348.6 V478 H349.8 V476.4 H348 Z" fill="#9a9a9a" stroke="#555" stroke-width="0.5"/>
 <path d="M350.4,479.6 H352" stroke="#333" stroke-width="0.8"/>
 <path d="M356.2,482 V483.8 H354.4 Z" fill="#111"/>
 <!-- delcam circle -->
 <circle cx="893.5" cy="479.1" r="5.1" fill="#d6ecf8"/><circle cx="893.5" cy="479.1" r="3.9" fill="#2a7a9c"/>
 <path d="M890.6,477.4 C892,476.2 895,476.2 896.4,477.4 M893.5,476.8 V482.4" stroke="#0c2c3a" stroke-width="1.1" fill="none"/>
 <!-- TASKBAR ICONS -->
 <g fill="#fff"><rect x="7.3" y="493.4" width="3.5" height="3.2"/><rect x="11.3" y="493" width="3.7" height="3.6"/><rect x="7.3" y="497.1" width="3.5" height="3.2"/><rect x="11.3" y="497.1" width="3.7" height="3.7"/></g>
 <rect x="31" y="491.4" width="7.8" height="10.4" fill="#8fc6e2" stroke="#5a9ac0" stroke-width="0.4"/>
 <rect x="32" y="492.4" width="5.8" height="2.6" fill="#c8e4f2"/>
 <path d="M32,496.4 H37.8 M32,498.4 H37.8 M32,500.4 H37.8" stroke="#6aa8cc" stroke-width="0.9" stroke-dasharray="1.4 0.8"/>
 <rect x="35.6" y="492.6" width="1.8" height="2" fill="#e8c860"/>
 <circle cx="57.8" cy="496.6" r="5" fill="#fff"/>
 <path d="M55.6,493.4 L57.9,497 L60.2,493.4 M57.9,497 V500.4" stroke="#e8202c" stroke-width="1.3" fill="none"/>
 <path d="M76,493.4 H79.8 L80.6,494.4 H86 V501 H76 Z" fill="#f2c12e"/>
 <rect x="76" y="495.4" width="10" height="5.6" fill="#f8d450"/>
 <rect x="78.4" y="497.6" width="5.2" height="3.4" fill="#4a9cd8"/>
 <path d="M99.6,492 L104.2,494 L106.4,491.8 L108.8,491.4 L107.6,499 L104.6,500.6 Z" fill="#2a7ad0"/>
 <path d="M103.4,495.4 L106.2,493.6 L105.6,497.6 Z" fill="#1c2f3f"/>
 <circle cx="126.7" cy="496.6" r="5" fill="#5a5ab8" stroke="#b8c4e8" stroke-width="0.6"/>
 <path d="M122.2,498 C123.6,494 127,492.4 130.4,493.4 C128.6,494.4 127.4,496 127,498.6 Z" fill="#dfe6f8"/>
 <ellipse cx="126.4" cy="499.2" rx="3" ry="2.2" fill="#e8701c"/>
 <!-- tray -->
 <path d="M797.4,498 L799.2,496 L801,498" stroke="#fff" stroke-width="0.6" fill="none"/>
 <path d="M808,494 H814 V498.4 H808 Z M809.6,499.8 H812.4" stroke="#fff" stroke-width="0.6" fill="none"/>
 <path d="M806.6,493.6 V499.6 H808.4" stroke="#fff" stroke-width="0.5" fill="none"/>
 <path d="M818.4,496 H819.6 L821.2,494.4 V499.6 L819.6,498 H818.4 Z" stroke="#fff" stroke-width="0.5" fill="none"/>
 <path d="M822.6,496 L824.4,498 M824.4,496 L822.6,498" stroke="#fff" stroke-width="0.5"/>
 <path d="M880.8,493.4 H888.2 V498.6 H885.6 L884.4,500 L883.4,498.6 H880.8 Z" fill="#fff"/>
 <path d="M882.2,495.2 H886.8 M882.2,496.8 H886.8" stroke="#1b2a3a" stroke-width="0.5"/>
 <path d="M897.4,487 V506" stroke="#5a6670" stroke-width="0.5"/>
 <!-- window controls -->
 <path d="M843.4,4.6 H848.2" stroke="#333" stroke-width="0.6"/>
 <path d="M864,3.4 H868 V7.4 H864 Z M865,3.4 V2.4 H869 V6.4 H868" stroke="#333" stroke-width="0.6" fill="none"/>
 <path d="M885.6,2.2 L890.4,7 M890.4,2.2 L885.6,7" stroke="#333" stroke-width="0.6"/>
 <g><rect x="873.4" y="11.6" width="7.6" height="7.4" fill="#fcfcfc" stroke="#ececec" stroke-width="0.4"/><rect x="882.6" y="11.6" width="7.6" height="7.4" fill="#fcfcfc" stroke="#ececec" stroke-width="0.4"/><rect x="891.8" y="11.6" width="7.6" height="7.4" fill="#fcfcfc" stroke="#ececec" stroke-width="0.4"/></g>
 <path d="M876,17.2 H878.4" stroke="#5a6a8a" stroke-width="0.7"/>
 <path d="M884.8,15 H887.4 V17.6 H884.8 Z M885.8,15 V14 H888.4 V16.6 H887.4" stroke="#5a6a8a" stroke-width="0.5" fill="none"/>
 <path d="M894.4,14.2 L896.8,16.8 M896.8,14.2 L894.4,16.8" stroke="#3a4a70" stroke-width="0.8"/>
 <!-- app icons title/menu -->
 <circle cx="4.8" cy="5" r="2.7" fill="#5a5ab8"/><path d="M2.6,5.8 C3.4,3.6 5.2,2.8 7,3.4 C6,4 5.4,5 5.2,6.2 Z" fill="#dfe6f8"/><ellipse cx="4.7" cy="6.4" rx="1.7" ry="1.2" fill="#e8701c"/>
 <circle cx="7" cy="15.4" r="2.7" fill="#5a5ab8"/><path d="M4.8,16.2 C5.6,14 7.4,13.2 9.2,13.8 C8.2,14.4 7.6,15.4 7.4,16.6 Z" fill="#dfe6f8"/><ellipse cx="6.9" cy="16.8" rx="1.7" ry="1.2" fill="#e8701c"/>
</svg>
</div>
</body>
</html>
